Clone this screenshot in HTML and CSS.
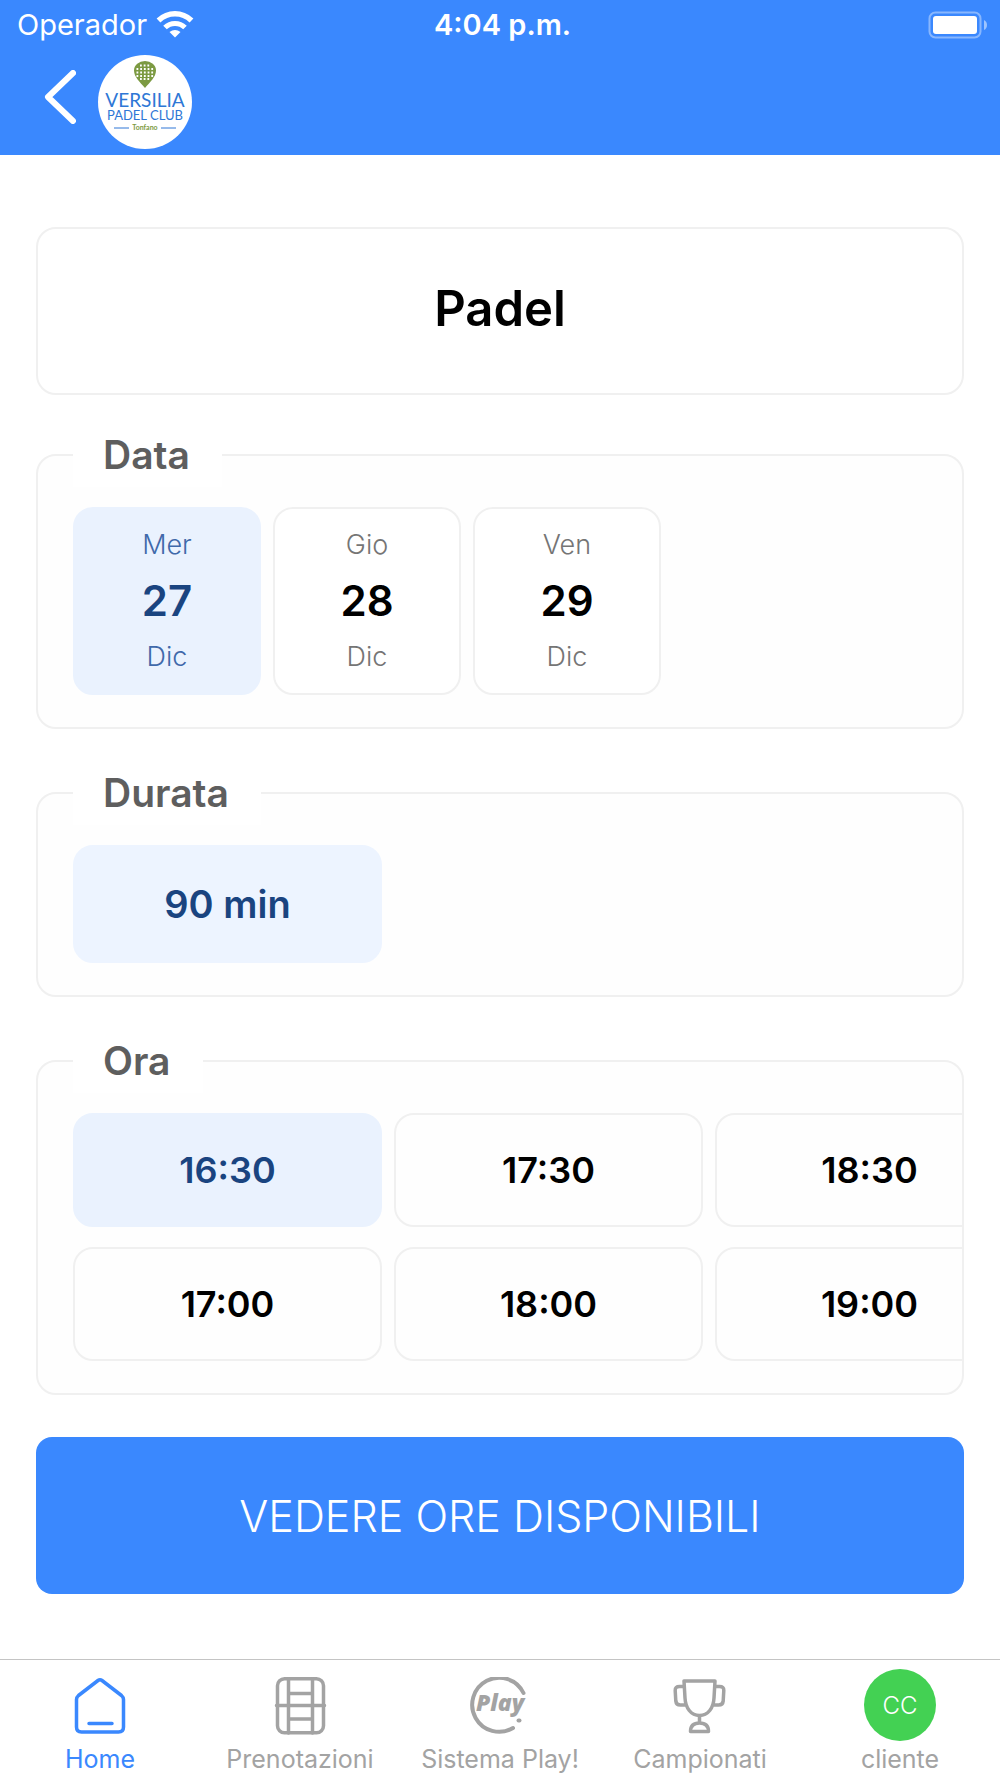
FILE: index.html
```html
<!DOCTYPE html>
<html lang="it">
<head>
  <meta charset="utf-8">
  <meta name="viewport" content="width=device-width, initial-scale=1">
  <title>Versilia Padel Club</title>
  <link rel="stylesheet" href="styles.css">
</head>
<body>
  <header class="header">
    <div class="status">
      <div class="status-carrier">
        <span>Operador</span>
        <svg width="38" height="28" viewBox="0 0 38 28" fill="none" stroke="#fff" aria-hidden="true">
          <path d="M2.500 9.500C12 .500 26 .500 35.500 9.500" stroke-width="5.500"/>
          <path d="M9 16.500C14.500 11 23.500 11 29 16.500" stroke-width="5"/>
          <path d="M13.500 21Q19 17 24.500 21L19 26.500z" fill="#fff" stroke="none"/>
        </svg>
      </div>
      <div class="status-time">4:04 p.m.</div>
      <svg class="status-battery" width="60" height="28" viewBox="0 0 60 28" aria-hidden="true">
        <rect x="1.500" y="1.500" width="51" height="25" rx="6" fill="none" stroke="#fff" stroke-opacity=".4" stroke-width="2"/>
        <rect x="5" y="5" width="44" height="18" rx="3" fill="#fff"/>
        <path d="M56 9q3 1.500 3 5t-3 5z" fill="#fff" fill-opacity=".5"/>
      </svg>
    </div>
    <nav class="topnav">
      <a class="back" href="#" aria-label="Indietro">
        <svg width="32" height="54" viewBox="0 0 32 54" fill="none" stroke="#fff" stroke-width="6" stroke-linecap="round" stroke-linejoin="round" aria-hidden="true"><path d="M29 3 4 27 29 51"/></svg>
      </a>
      <svg class="logo" width="94" height="94" viewBox="0 0 94 94" role="img" aria-label="Versilia Padel Club Tonfano">
        <circle cx="47" cy="47" r="47" fill="#fff"/>
        <path d="M47 33C42 27 36 22 36 15.500a11 9.500 0 0 1 22 0C58 22 52 27 47 33z" fill="#7c9a42"/>
        <path d="M42 10.500h10M38.500 14h17M38.500 17.500h17M38.500 21h17M42 24h10" stroke="#fff" stroke-width="1.800" stroke-dasharray="1.800 1.900"/>
        <text class="logo-name" x="47" y="52">VERSILIA</text>
        <text class="logo-club" x="47" y="65">PADEL CLUB</text>
        <path d="M16 73h15M63 73h15" stroke="#2e77d6"/>
        <text class="logo-place" x="47" y="75">Tonfano</text>
      </svg>
    </nav>
  </header>

  <main class="main">
    <h1 class="sport">Padel</h1>
    <form class="booking">
      <fieldset class="group">
        <legend>Data</legend>
        <div class="days">
          <button type="button" class="tile day selected" aria-pressed="true"><span>Mer</span><strong>27</strong><span>Dic</span></button>
          <button type="button" class="tile day" aria-pressed="false"><span>Gio</span><strong>28</strong><span>Dic</span></button>
          <button type="button" class="tile day" aria-pressed="false"><span>Ven</span><strong>29</strong><span>Dic</span></button>
        </div>
      </fieldset>
      <fieldset class="group">
        <legend>Durata</legend>
        <button type="button" class="tile duration selected" aria-pressed="true">90 min</button>
      </fieldset>
      <fieldset class="group">
        <legend>Ora</legend>
        <div class="hours">
          <button type="button" class="tile hour selected" aria-pressed="true">16:30</button>
          <button type="button" class="tile hour" aria-pressed="false">17:00</button>
          <button type="button" class="tile hour" aria-pressed="false">17:30</button>
          <button type="button" class="tile hour" aria-pressed="false">18:00</button>
          <button type="button" class="tile hour" aria-pressed="false">18:30</button>
          <button type="button" class="tile hour" aria-pressed="false">19:00</button>
        </div>
      </fieldset>
      <button type="submit" class="submit">VEDERE ORE DISPONIBILI</button>
    </form>
  </main>

  <nav class="tabs">
    <a class="tab active" href="#" aria-current="page">
      <span class="tab-icon"><svg width="60" height="60" viewBox="0 0 60 60" fill="none" stroke="currentColor" stroke-width="3.500" stroke-linecap="round" stroke-linejoin="round" aria-hidden="true"><path d="M28 3.500q2-1.500 4 0L51.500 18.500q2 1.800 2 4V50q0 5-5 5h-37q-5 0-5-5V22.500q0-2.200 2-4zM19 46.500h23"/></svg></span>
      <span>Home</span>
    </a>
    <a class="tab" href="#">
      <span class="tab-icon"><svg width="60" height="60" viewBox="0 0 60 60" fill="none" stroke="currentColor" stroke-width="3.500" stroke-linecap="round" aria-hidden="true"><rect x="7.500" y="1.800" width="46" height="54" rx="7"/><path d="M18.500 2v54M42.500 2v54M18.500 16.500h24M6.500 28.500h48M18.500 42h24"/></svg></span>
      <span>Prenotazioni</span>
    </a>
    <a class="tab" href="#">
      <span class="tab-icon"><svg width="60" height="60" viewBox="0 0 60 60" fill="none" stroke="currentColor" stroke-linecap="round" aria-hidden="true"><path d="M53.500 16A27 27 0 1 0 43 51" stroke-width="4"/><text class="play-word" x="6" y="34">Play</text><path d="M48.500 43.500h1" stroke-width="4"/></svg></span>
      <span>Sistema Play!</span>
    </a>
    <a class="tab" href="#">
      <span class="tab-icon"><svg width="60" height="60" viewBox="0 0 60 60" fill="none" stroke="currentColor" stroke-width="3.500" stroke-linejoin="round" aria-hidden="true"><path d="M14 4h31l-1 17c-.5 10-6 17.500-14.500 17.500S15.500 31 15 21zM14 9.500H9.500q-4.500 0-4.300 4l.6 10.500q.4 4 4.500 4H16M45 9.500H49.500q4.500 0 4.300 4l-.6 10.500q-.4 4-4.500 4H43M29.500 39v7M20.500 54.500q0-8.500 9-8.500t9 8.500z"/></svg></span>
      <span>Campionati</span>
    </a>
    <a class="tab" href="#">
      <span class="tab-icon avatar">CC</span>
      <span>cliente</span>
    </a>
  </nav>
</body>
</html>
```

FILE: styles.css
```css
* { box-sizing: border-box; }

body {
  margin: 0;
  min-height: 100vh;
  display: flex;
  flex-direction: column;
  background: #fff;
  color: #000;
  font-family: Inter, "Liberation Sans", sans-serif;
}

button { font: inherit; color: inherit; cursor: pointer; }
svg { display: block; }

.header { background: #3a88fe; color: #fff; }

.status {
  display: grid;
  grid-template-columns: 1fr auto 1fr;
  align-items: center;
  height: 49px;
  padding: 0 12px 0 17px;
  font-size: 29px;
}
.status-carrier { display: flex; align-items: center; gap: 9px; }
.status-time { font-weight: 600; }
.status-battery { justify-self: end; }

.topnav {
  display: flex;
  align-items: center;
  gap: 22px;
  height: 106px;
  padding-left: 44px;
}
.back { padding-bottom: 10px; }
.logo text { text-anchor: middle; font-family: Lato, sans-serif; fill: #2e77d6; }
.logo .logo-name { font-size: 19px; }
.logo .logo-club { font-size: 13px; }
.logo .logo-place { font-size: 7px; font-weight: 700; fill: #7c9a42; }

.main { flex: 1; padding: 72px 36px 56px; }

.sport {
  margin: 0 0 28px;
  padding: 52px 0 56px;
  border: 2px solid #f0f0f0;
  border-radius: 20px;
  font-size: 49px;
  font-weight: 600;
  line-height: 56px;
  text-align: center;
}

.booking { display: flex; flex-direction: column; gap: 32px; }

.group {
  min-width: 0;
  margin: 0;
  padding: 20px 0 32px 35px;
  border: 2px solid #f0f0f0;
  border-radius: 20px;
  background: #fefefe;
}
.group legend {
  padding: 0 32px 0 30px;
  background: #fff;
  color: #5e5e5e;
  font-size: 39px;
  font-weight: 600;
  line-height: 64px;
}

.tile {
  padding: 0;
  border: 2px solid #f0f0f0;
  border-radius: 20px;
  background: #fff;
  font-size: 36px;
  font-weight: 600;
}
.tile.selected { border-color: #eaf2fe; background: #eaf2fe; color: #1a4480; }

.days { display: flex; gap: 12px; }
.day {
  display: flex;
  flex-direction: column;
  align-items: center;
  justify-content: center;
  width: 188px;
  height: 188px;
  line-height: 56px;
}
.day span { color: #757575; font-size: 27px; font-weight: 300; }
.day strong { font-size: 42px; font-weight: 600; }
.day.selected span { color: #3f69aa; }

.duration { display: block; width: 309px; height: 118px; font-size: 38px; }
.duration.selected { border-color: #edf4ff; background: #edf4ff; }

.hours {
  display: grid;
  grid-template-rows: repeat(2, 114px);
  grid-auto-flow: column;
  grid-auto-columns: 309px;
  gap: 20px 12px;
  overflow-x: auto;
  scrollbar-width: none;
}
.hour { background: #fefefe; }

.submit {
  margin-top: 10px;
  height: 157px;
  border: 0;
  border-radius: 16px;
  background: #3a88fe;
  color: #fff;
  font-size: 43px;
  font-weight: 300;
}

.tabs {
  display: grid;
  grid-template-columns: repeat(5, 1fr);
  border-top: 1px solid #c4c4c4;
  background: #fff;
}
.tab {
  display: flex;
  flex-direction: column;
  align-items: center;
  padding-top: 9px;
  color: #a3a3a3;
  font-size: 25px;
  line-height: 37px;
  text-decoration: none;
}
.tab.active { color: #3a88fe; }
.tab-icon {
  display: flex;
  align-items: center;
  justify-content: center;
  width: 72px;
  height: 72px;
}
.tab-icon svg { margin-top: 3px; }
.play-word {
  fill: currentColor;
  stroke: none;
  font-family: "Open Sans", sans-serif;
  font-size: 23px;
  font-style: italic;
  font-weight: 800;
}
.avatar {
  border-radius: 50%;
  background: #43d153;
  color: #fff;
  font-size: 24px;
  font-weight: 300;
}
```
